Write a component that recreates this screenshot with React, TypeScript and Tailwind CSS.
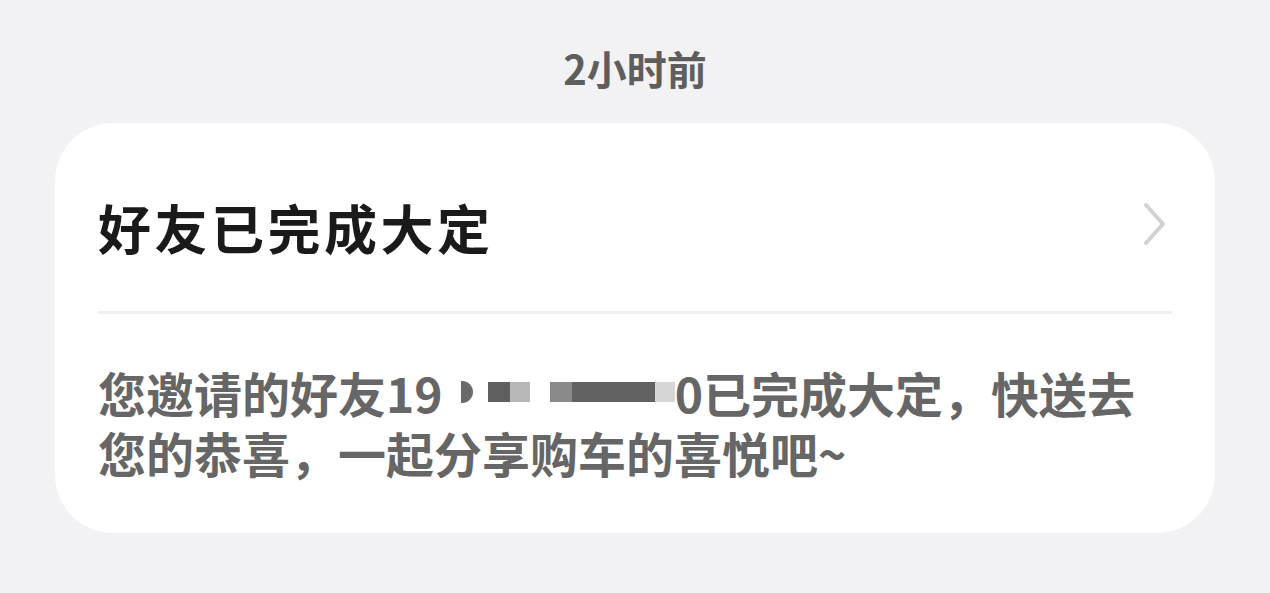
import React from 'react';

const font = "font-['Noto_Sans_CJK_SC','Noto_Sans',sans-serif]";

// 手机号打码部分
const MaskedPhone: React.FC = () => (
  <span className="inline-flex items-center h-[60px]">
    <span>19</span>
    <span className="inline-flex h-[40px] items-center">
      <span className="w-[18px]" />
      <span className="w-[12px] h-[22px] rounded-r-full bg-[#6a6a6a]" />
      <span className="w-[15px]" />
      <span className="w-[22px] h-[20px] bg-[#5f5f5f]" />
      <span className="w-[20px] h-[20px] bg-[#b8b8b8]" />
      <span className="w-[20px]" />
      <span className="w-[22px] h-[20px] bg-[#8a8a8a]" />
      <span className="w-[83px] h-[20px] bg-[#626262]" />
      <span className="w-[20px] h-[20px] bg-[#d6d6d6]" />
    </span>
    <span>0</span>
  </span>
);

const App: React.FC = () => {
  return (
    <div className={`min-h-[593px] w-full bg-[#f2f2f4] flex flex-col items-center ${font}`}>
      <div className="mt-[48px] h-[40px] leading-[40px] text-[40px] font-bold text-[#5e5e5e]">
        2小时前
      </div>

      <div className="mt-[35px] w-[1160px] rounded-[58px] bg-white px-[43px]">
        <div className="flex items-center justify-between pt-[77px] pb-[57px]">
          <h2 className="h-[54px] leading-[54px] text-[53px] font-bold text-[#1a1a1a] tracking-[3.5px]">
            好友已完成大定
          </h2>
          <svg width="26" height="46" viewBox="0 0 26 46" className="mr-[4px] -mt-[6px]">
            <path
              d="M4 4 L21 23 L4 42"
              fill="none"
              stroke="#d2d2d2"
              strokeWidth="4"
              strokeLinecap="round"
              strokeLinejoin="round"
            />
          </svg>
        </div>

        <div className="h-[3px] bg-[#f0f0f0]" />

        <div className="pt-[48px] pb-[51px] text-[48px] leading-[60px] font-bold text-[#666666]">
          <div className="flex items-center h-[60px] whitespace-nowrap">
            <span>您邀请的好友</span>
            <MaskedPhone />
            <span>已完成大定，快送去</span>
          </div>
          <div className="h-[60px] whitespace-nowrap">您的恭喜，一起分享购车的喜悦吧~</div>
        </div>
      </div>
    </div>
  );
};

export default App;
